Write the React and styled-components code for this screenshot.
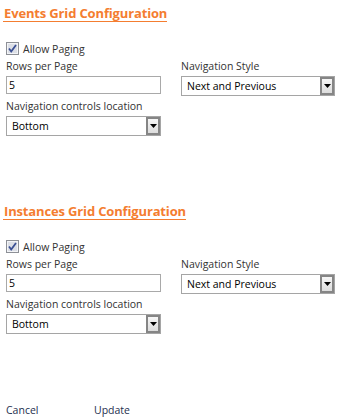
import React from 'react';
import styled, { createGlobalStyle } from 'styled-components';

const GlobalStyle = createGlobalStyle`
  body {
    margin: 0;
    background: #ffffff;
    font-family: "Open Sans", "Liberation Sans", sans-serif;
  }
`;

const Page = styled.div`
  width: 341px;
  height: 420px;
  padding: 0 0 0 6px;
  box-sizing: border-box;
  color: #333333;
  font-size: 10.5px;
`;

const Section = styled.div`
  height: 198px;
`;

const Title = styled.div`
  display: inline-block;
  margin: 6px 0 0 -3px;
  padding: 0 0 1px 1px;
  font-size: 13px;
  font-weight: bold;
  line-height: 14px;
  letter-spacing: -0.15px;
  color: #f47d30;
  border-bottom: 1px solid #f47d30;
`;

const CheckRow = styled.label`
  display: flex;
  align-items: center;
  gap: 4px;
  margin-top: 20px;
  height: 13px;
  color: #333333;
`;

const Grid = styled.div`
  display: grid;
  grid-template-columns: 155px 154px;
  column-gap: 20px;
  margin-top: 3px;
`;

const Field = styled.div`
  display: flex;
  flex-direction: column;
  gap: 1px;
  height: 40px;
`;

const Label = styled.div`
  height: 17px;
  line-height: 17px;
  color: #333333;
`;

const TextBox = styled.div`
  height: 18px;
  box-sizing: border-box;
  border: 1px solid #a9a9a9;
  padding-left: 2px;
  line-height: 16px;
  color: #000000;
`;

const Select = styled.div`
  height: 20px;
  box-sizing: border-box;
  border: 1px solid #a5a5a5;
  display: flex;
  align-items: stretch;
  color: #000000;
`;

const SelectText = styled.div`
  flex: 1;
  padding-left: 5px;
  line-height: 18px;
`;

const ArrowButton = styled.div`
  width: 14px;
  box-sizing: border-box;
  border: 2px solid #858585;
  background: linear-gradient(#f6f6f6, #dcdcdc);
  display: flex;
  align-items: center;
  justify-content: center;
`;

const Footer = styled.div`
  display: flex;
  margin-top: 7px;
  color: #1e2f4f;
`;

const FooterLink = styled.span`
  width: 88px;
`;

function CheckIcon() {
  return (
    <svg width="13" height="13" viewBox="0 0 13 13">
      <rect x="0.5" y="0.5" width="12" height="12" fill="#dcdfe6" stroke="#8d9096" />
      <rect x="1.5" y="1.5" width="10" height="10" fill="none" stroke="#f3f4f7" />
      <path d="M3 6.5 L5.2 9.5 L10 3" fill="none" stroke="#3a4f93" strokeWidth="1.8" />
    </svg>
  );
}

function DropDown({ value }) {
  return (
    <Select>
      <SelectText>{value}</SelectText>
      <ArrowButton>
        <svg width="7" height="4" viewBox="0 0 7 4">
          <path d="M0 0 H7 L3.5 4 Z" fill="#000" />
        </svg>
      </ArrowButton>
    </Select>
  );
}

function GridConfig({ title }) {
  return (
    <Section>
      <Title>{title}</Title>
      <CheckRow>
        <CheckIcon />
        Allow Paging
      </CheckRow>
      <Grid>
        <Field>
          <Label>Rows per Page</Label>
          <TextBox>5</TextBox>
        </Field>
        <Field>
          <Label>Navigation Style</Label>
          <DropDown value="Next and Previous" />
        </Field>
        <Field>
          <Label>Navigation controls location</Label>
          <DropDown value="Bottom" />
        </Field>
      </Grid>
    </Section>
  );
}

export default function App() {
  return (
    <Page>
      <GlobalStyle />
      <GridConfig title="Events Grid Configuration" />
      <GridConfig title="Instances Grid Configuration" />
      <Footer>
        <FooterLink>Cancel</FooterLink>
        <FooterLink>Update</FooterLink>
      </Footer>
    </Page>
  );
}
